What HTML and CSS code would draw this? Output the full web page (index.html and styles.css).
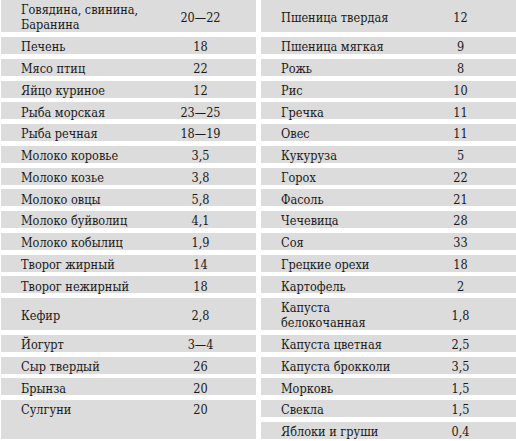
FILE: index.html
```html
<!DOCTYPE html>
<html lang="ru">
<head>
<meta charset="utf-8">
<title>Содержание белка</title>
<link rel="stylesheet" href="styles.css">
</head>
<body class="page">
<div class="table">
  <div class="half">
    <div class="name">Говядина, свинина, Баранина</div><div class="val">20—22</div>
    <div class="name">Печень</div><div class="val">18</div>
    <div class="name">Мясо птиц</div><div class="val">22</div>
    <div class="name">Яйцо куриное</div><div class="val">12</div>
    <div class="name">Рыба морская</div><div class="val">23—25</div>
    <div class="name">Рыба речная</div><div class="val">18—19</div>
    <div class="name">Молоко коровье</div><div class="val">3,5</div>
    <div class="name">Молоко козье</div><div class="val">3,8</div>
    <div class="name">Молоко овцы</div><div class="val">5,8</div>
    <div class="name">Молоко буйволиц</div><div class="val">4,1</div>
    <div class="name">Молоко кобылиц</div><div class="val">1,9</div>
    <div class="name">Творог жирный</div><div class="val">14</div>
    <div class="name">Творог нежирный</div><div class="val">18</div>
    <div class="name">Кефир</div><div class="val">2,8</div>
    <div class="name">Йогурт</div><div class="val">3—4</div>
    <div class="name">Сыр твердый</div><div class="val">26</div>
    <div class="name">Брынза</div><div class="val">20</div>
    <div class="name last">Сулгуни</div><div class="val last">20</div>
  </div>
  <div class="half">
    <div class="name">Пшеница твердая</div><div class="val">12</div>
    <div class="name">Пшеница мягкая</div><div class="val">9</div>
    <div class="name">Рожь</div><div class="val">8</div>
    <div class="name">Рис</div><div class="val">10</div>
    <div class="name">Гречка</div><div class="val">11</div>
    <div class="name">Овес</div><div class="val">11</div>
    <div class="name">Кукуруза</div><div class="val">5</div>
    <div class="name">Горох</div><div class="val">22</div>
    <div class="name">Фасоль</div><div class="val">21</div>
    <div class="name">Чечевица</div><div class="val">28</div>
    <div class="name">Соя</div><div class="val">33</div>
    <div class="name">Грецкие орехи</div><div class="val">18</div>
    <div class="name">Картофель</div><div class="val">2</div>
    <div class="name">Капуста белокочанная</div><div class="val">1,8</div>
    <div class="name">Капуста цветная</div><div class="val">2,5</div>
    <div class="name">Капуста брокколи</div><div class="val">3,5</div>
    <div class="name">Морковь</div><div class="val">1,5</div>
    <div class="name">Свекла</div><div class="val">1,5</div>
    <div class="name">Яблоки и груши</div><div class="val">0,4</div>
  </div>
</div>
</body>
</html>
```

FILE: styles.css
```css
html, body {
  margin: 0;
  padding: 0;
  background: #ffffff;
}

.page {
  font-family: "DejaVu Serif Condensed", "DejaVu Serif", serif;
  font-stretch: condensed;
  font-size: 12.6px;
  color: #1a1a1a;
}

.table {
  display: grid;
  grid-template-columns: 255px 255px;
  column-gap: 5px;
  padding-left: 1px;
}

.half {
  display: grid;
  grid-template-columns: 144px 1fr;
  grid-template-rows: 32.3px repeat(12, 17px) 32px repeat(5, 17px);
  row-gap: 4.75px;
}

.name,
.val {
  background: #dcdcdc;
  display: flex;
  align-items: center;
  line-height: 15px;
  padding-top: 2.5px;
  box-sizing: border-box;
}

.name {
  padding-left: 20px;
  padding-right: 4px;
}

.val {
  justify-content: center;
}

.last {
  grid-row: span 2;
  align-items: flex-start;
  padding-top: 2.25px;
}
```
